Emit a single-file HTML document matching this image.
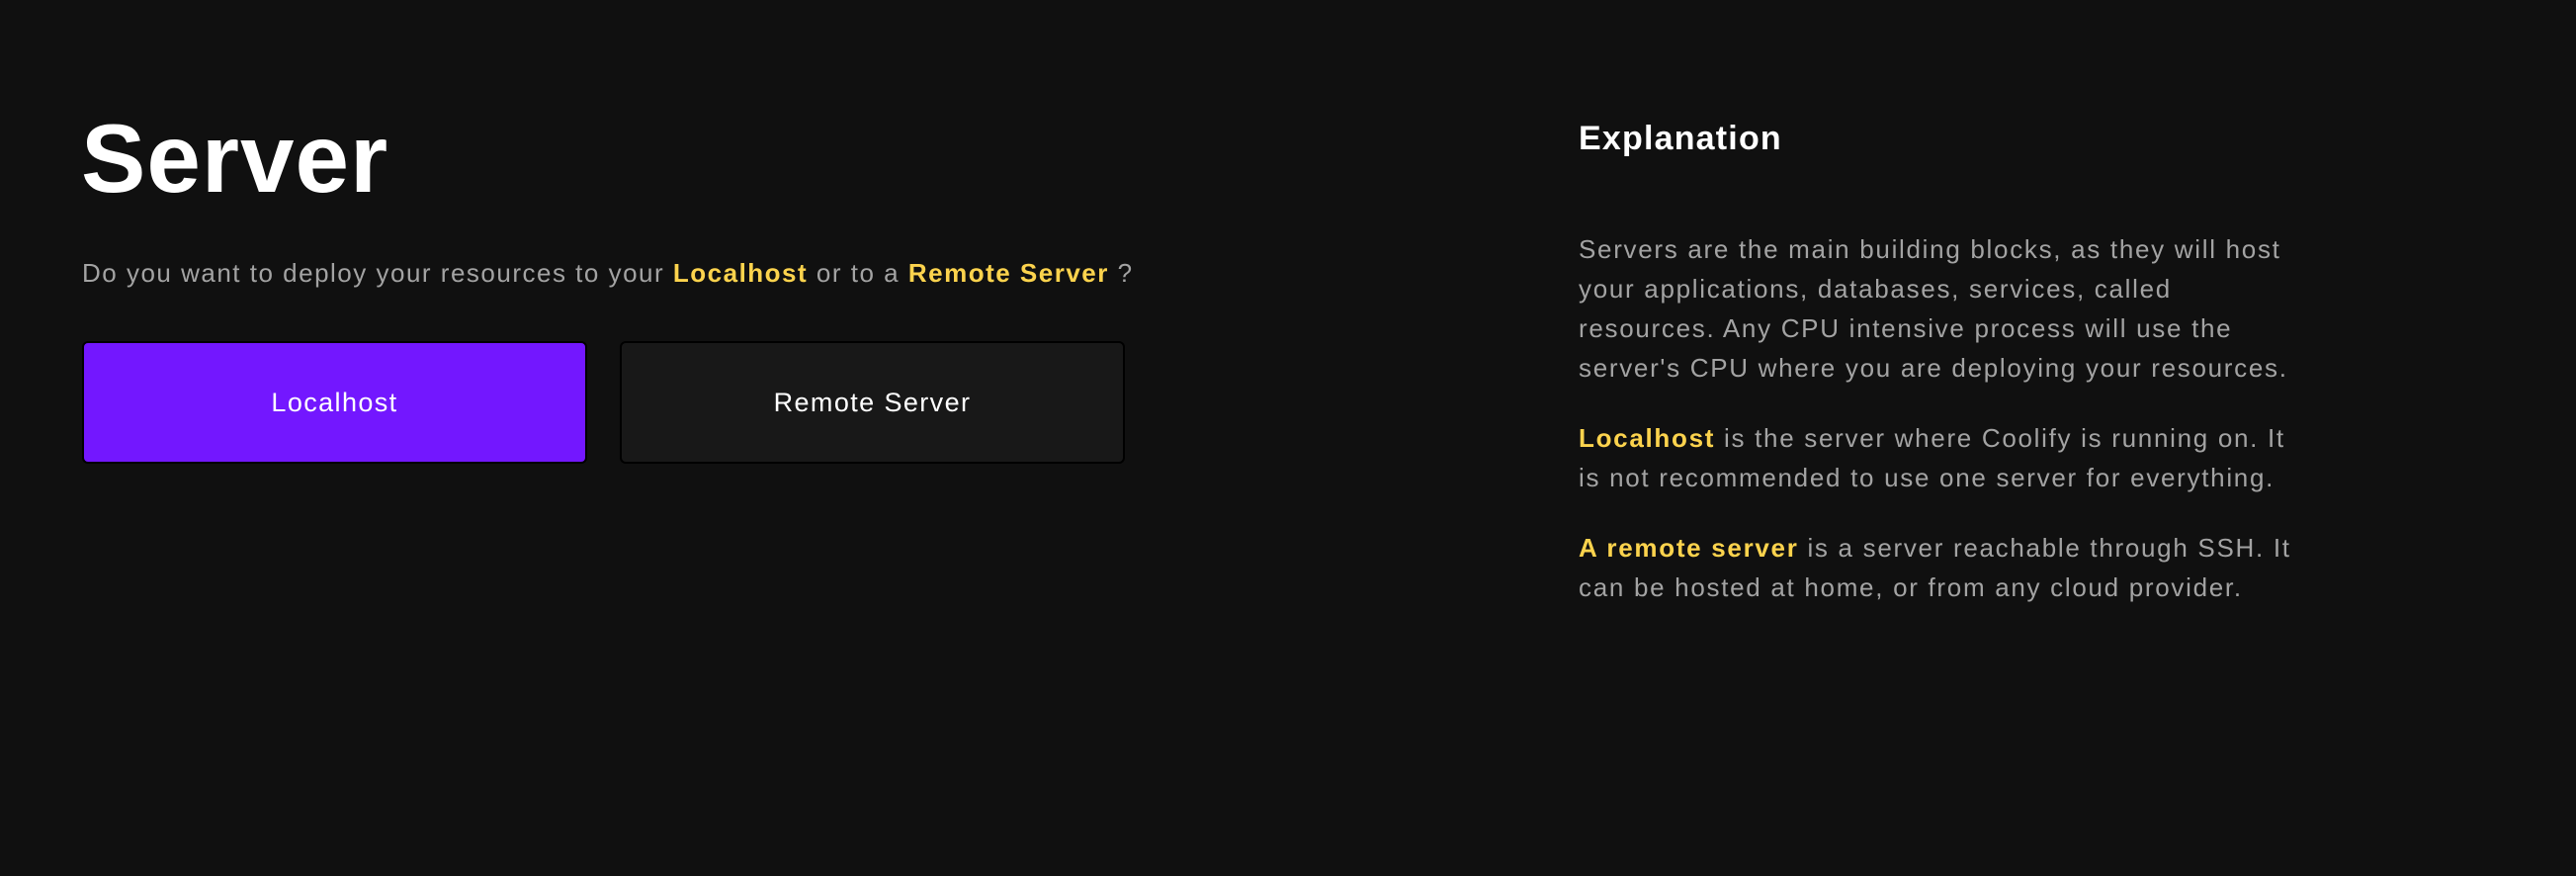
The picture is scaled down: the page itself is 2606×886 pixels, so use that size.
<!DOCTYPE html>
<html><head><meta charset="utf-8"><style>
html,body{margin:0;padding:0;background:#101010;width:2606px;height:886px;overflow:hidden;font-family:"Liberation Sans",sans-serif;}
.t{position:absolute;left:82px;top:100px;font-size:98px;font-weight:bold;color:#fff;line-height:120px;margin:0;letter-spacing:1px}
.sub{position:absolute;left:83px;top:258px;font-size:26px;color:#a3a3a3;line-height:36px;white-space:nowrap;letter-spacing:1.5px}
.y{color:#fcd34d;font-weight:bold}
.btn{position:absolute;top:345px;height:124px;border-radius:6px;display:flex;align-items:center;justify-content:center;font-size:27px;color:#fff;box-sizing:border-box;border:2px solid #000;letter-spacing:1.4px}
.b1{left:83px;width:511px;background:#7317ff}
.b2{left:627px;width:511px;background:#181818}
.h{position:absolute;left:1597px;top:118px;font-size:34px;font-weight:bold;color:#fff;line-height:44px;margin:0;letter-spacing:1.2px}
.exp{position:absolute;left:1597px;top:232px;width:760px;font-size:26px;color:#a3a3a3;line-height:40px;letter-spacing:1.7px;white-space:nowrap}
.exp p{margin:0 0 31px 0}
</style></head><body>
<h1 class="t">Server</h1>
<div class="sub">Do you want to deploy your resources to your <span class="y">Localhost</span> or to a <span class="y">Remote Server</span> ?</div>
<div class="btn b1">Localhost</div>
<div class="btn b2">Remote Server</div>
<h2 class="h">Explanation</h2>
<div class="exp">
<p>Servers are the main building blocks, as they will host<br>your applications, databases, services, called<br>resources. Any CPU intensive process will use the<br>server's CPU where you are deploying your resources.</p>
<p><span class="y">Localhost</span> is the server where Coolify is running on. It<br>is not recommended to use one server for everything.</p>
<p><span class="y">A remote server</span> is a server reachable through SSH. It<br>can be hosted at home, or from any cloud provider.</p>
</div>
</body></html>
